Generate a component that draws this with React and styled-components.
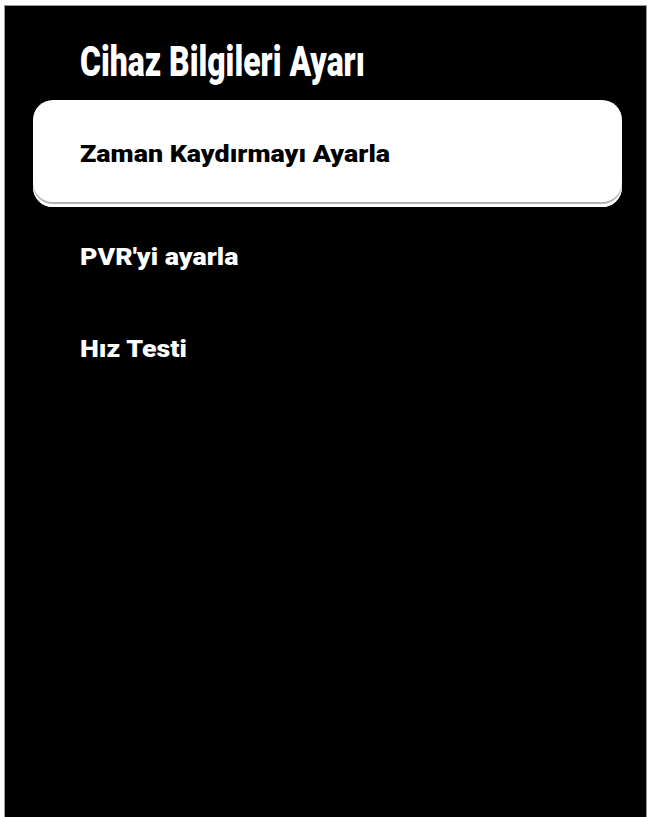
import styled, { createGlobalStyle } from "styled-components";

const GlobalStyle = createGlobalStyle`
  html, body {
    margin: 0;
    padding: 0;
    background: #fff;
  }
  body {
    font-family: Roboto, "Noto Sans", "Liberation Sans", sans-serif;
  }
`;

const menuItems = [
  { id: "timeshift", label: "Zaman Kaydırmayı Ayarla" },
  { id: "pvr", label: "PVR'yi ayarla" },
  { id: "speed", label: "Hız Testi" },
];

const Screen = styled.div`
  box-sizing: border-box;
  margin: 5px 1px 0 4px;
  height: 812px;
  background: #000;
  border: 1px solid #9a9a9a;
  border-bottom: none;
  padding-top: 32px;
`;

const Title = styled.h1`
  margin: 0 0 14px 75px;
  color: #fff;
  font-size: 42px;
  line-height: 48px;
  font-weight: 900;
  white-space: nowrap;
  transform: scaleX(0.76);
  transform-origin: left center;
`;

const List = styled.ul`
  list-style: none;
  margin: 0;
  padding: 0 24px 0 28px;
  display: flex;
  flex-direction: column;
`;

const Item = styled.li`
  display: flex;
  align-items: center;
  box-sizing: border-box;
  height: ${(p) => (p.$focused ? "107px" : "92px")};
  margin-bottom: ${(p) => (p.$focused ? "4px" : "0")};
  padding-left: 47px;
  border-radius: ${(p) => (p.$focused ? "20px" : "0")};
  background: ${(p) => (p.$focused ? "#fff" : "transparent")};
  box-shadow: ${(p) =>
    p.$focused ? "inset 0 -3px 0 #fff, inset 0 -5px 0 #b4b4b4" : "none"};
  color: ${(p) => (p.$focused ? "#000" : "#fff")};
  font-size: 23.5px;
  font-weight: 900;
`;

const Label = styled.span`
  display: inline-block;
  white-space: nowrap;
  transform: scaleX(1.14);
  transform-origin: left center;
`;

export default function App() {
  return (
    <>
      <GlobalStyle />
      <Screen>
        <Title>Cihaz Bilgileri Ayarı</Title>
        <List>
          {menuItems.map((item, i) => (
            <Item key={item.id} $focused={i === 0}>
              <Label>{item.label}</Label>
            </Item>
          ))}
        </List>
      </Screen>
    </>
  );
}
